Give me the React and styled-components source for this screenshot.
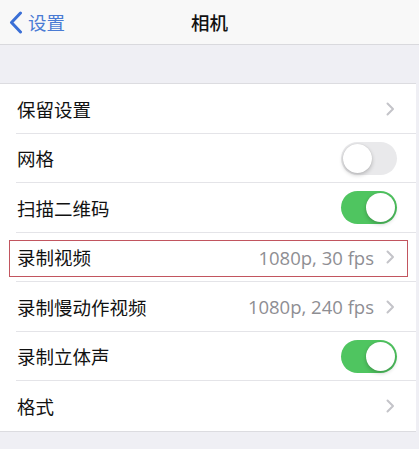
import React from 'react';
import styled, { createGlobalStyle } from 'styled-components';

const GlobalStyle = createGlobalStyle`
    html, body {
        margin: 0;
        padding: 0;
        background-color: #efeff4;
    }
    body {
        font-family: "Noto Sans CJK SC", "Noto Sans", sans-serif;
        -webkit-font-smoothing: antialiased;
    }
`;

const Page = styled.div`
    width: 419px;
    height: 449px;
    overflow: hidden;
    background-color: #efeff4;
`;

const NavBar = styled.div`
    position: relative;
    height: 44px;
    background-color: #f8f8f8;
    border-bottom: 1px solid #d9d9dd;
    display: flex;
    align-items: center;
    justify-content: center;
`;

const BackButton = styled.div`
    position: absolute;
    left: 9px;
    top: 0;
    height: 44px;
    display: flex;
    align-items: center;
    gap: 5px;
    color: #4a7bd4;
    font-size: 18.5px;
`;

const Title = styled.div`
    font-size: 18.5px;
    font-weight: 500;
    color: #111;
`;

const Spacer = styled.div`
    height: 38px;
`;

const List = styled.div`
    background-color: #fff;
    border-top: 1px solid #dcdce0;
    border-bottom: 1px solid #dcdce0;
    margin-right: 3px;
`;

const Row = styled.div`
    position: relative;
    height: 49.5px;
    padding-left: 17px;
    display: flex;
    align-items: center;
    &:not(:last-child)::after {
        content: '';
        position: absolute;
        left: 16px;
        right: 0;
        bottom: 0;
        height: 1px;
        background-color: #e4e4e8;
    }
`;

const Highlight = styled.div`
    position: absolute;
    left: 9px;
    right: 8px;
    top: 7px;
    bottom: 5px;
    border: 1px solid #c2555f;
    pointer-events: none;
`;

const Label = styled.div`
    flex: 1;
    font-size: 18.5px;
    color: #111;
`;

const Detail = styled.div`
    font-family: "Open Sans", "Noto Sans", sans-serif;
    font-size: 18.5px;
    color: #8e8e93;
    margin-right: 12px;
`;

const Chevron = styled.svg`
    width: 9px;
    height: 14px;
    margin-right: 21px;
`;

const Toggle = styled.div`
    position: relative;
    width: 56px;
    height: 33px;
    border-radius: 17px;
    margin-right: 19px;
    background-color: ${p => (p.$on ? '#4fc560' : '#e9e9eb')};
`;

const Knob = styled.div`
    position: absolute;
    top: 2px;
    left: ${p => (p.$on ? '25px' : '2px')};
    width: 29px;
    height: 29px;
    border-radius: 50%;
    background-color: #fff;
    box-shadow: 0 2px 4px rgba(0, 0, 0, 0.22), 0 0 1px rgba(0, 0, 0, 0.15);
`;

const rows = [
    { label: '保留设置', type: 'link' },
    { label: '网格', type: 'toggle', on: false },
    { label: '扫描二维码', type: 'toggle', on: true },
    { label: '录制视频', type: 'link', detail: '1080p, 30 fps', marked: true },
    { label: '录制慢动作视频', type: 'link', detail: '1080p, 240 fps' },
    { label: '录制立体声', type: 'toggle', on: true },
    { label: '格式', type: 'link' },
];

function ChevronIcon() {
    return (
        <Chevron viewBox="0 0 9 14">
            <path d="M1.5 1.5 L7 7 L1.5 12.5" fill="none" stroke="#c4c4c9" strokeWidth="2" strokeLinecap="round" strokeLinejoin="round" />
        </Chevron>
    );
}

export default function App() {
    return (
        <Page>
            <GlobalStyle />
            <NavBar>
                <BackButton>
                    <svg width="14" height="23" viewBox="0 0 14 23">
                        <path d="M11.5 2 L2.5 11.5 L11.5 21" fill="none" stroke="#3a6fd6" strokeWidth="3" strokeLinecap="round" strokeLinejoin="round" />
                    </svg>
                    设置
                </BackButton>
                <Title>相机</Title>
            </NavBar>
            <Spacer />
            <List>
                {rows.map(r => (
                    <Row key={r.label}>
                        {r.marked && <Highlight />}
                        <Label>{r.label}</Label>
                        {r.detail && <Detail>{r.detail}</Detail>}
                        {r.type === 'link' && <ChevronIcon />}
                        {r.type === 'toggle' && (
                            <Toggle $on={r.on}>
                                <Knob $on={r.on} />
                            </Toggle>
                        )}
                    </Row>
                ))}
            </List>
        </Page>
    );
}
